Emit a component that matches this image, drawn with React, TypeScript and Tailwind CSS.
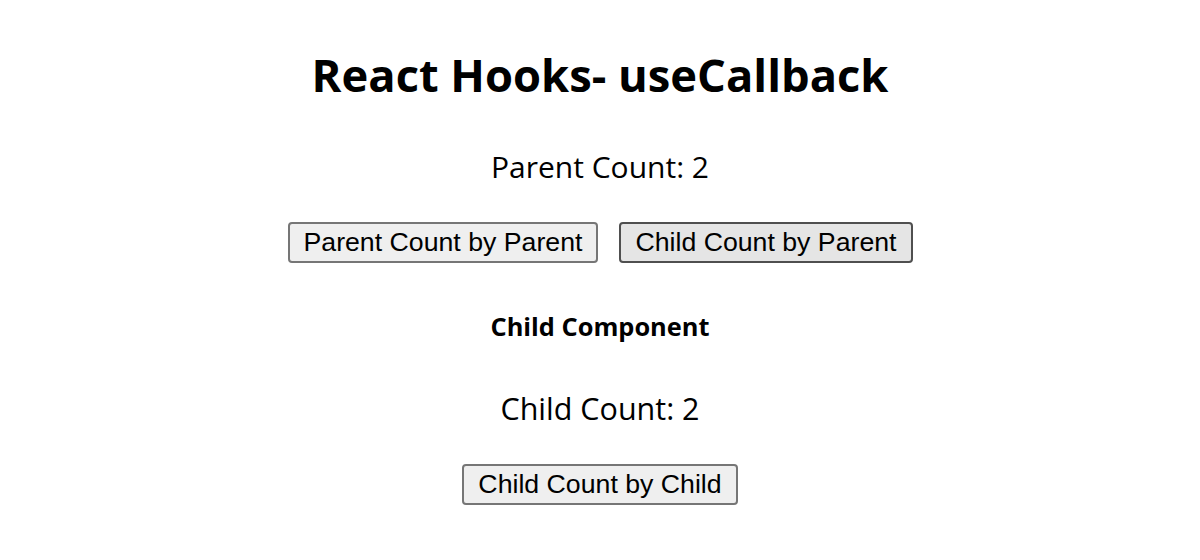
import React, { useState, useCallback } from 'react';

const btnBase =
  "border-2 rounded-[4px] px-[14px] h-[41px] text-[26.7px] leading-none text-black font-['Liberation_Sans',Arial,sans-serif]";
const btn = `${btnBase} bg-[#efefef] border-[#767676]`;
const btnActive = `${btnBase} bg-[#e5e5e5] border-[#4f4f4f]`;

const Child = ({ count, onInc }: { count: number; onInc: () => void }) => {
  return (
    <div className="flex flex-col items-center">
      <h3 className="mt-[47px] text-[25.4px] leading-[32px] font-bold">Child Component</h3>
      <p className="mt-[46px] text-[30.5px] leading-[40px]">Child Count: {count}</p>
      <button className={`${btn} mt-[36px]`} onClick={onInc}>
        Child Count by Child
      </button>
    </div>
  );
};

const App = () => {
  const [parentCount, setParentCount] = useState(2);
  const [childCount, setChildCount] = useState(2);

  const incChild = useCallback(() => setChildCount((c) => c + 1), []);

  return (
    <div className="min-h-[560px] bg-white text-black flex flex-col items-center font-['Segoe_UI','Open_Sans',sans-serif]">
      <h1 className="mt-[47px] text-[45.3px] leading-[56px] font-bold">React Hooks- useCallback</h1>
      <p className="mt-[44px] text-[30px] leading-[40px]">Parent Count: {parentCount}</p>
      <div className="mt-[35px] flex gap-[21px]">
        <button className={`${btn} px-[13px]`} onClick={() => setParentCount((c) => c + 1)}>
          Parent Count by Parent
        </button>
        <button className={btnActive} onClick={incChild}>
          Child Count by Parent
        </button>
      </div>
      <Child count={childCount} onInc={incChild} />
    </div>
  );
};

export default App;
